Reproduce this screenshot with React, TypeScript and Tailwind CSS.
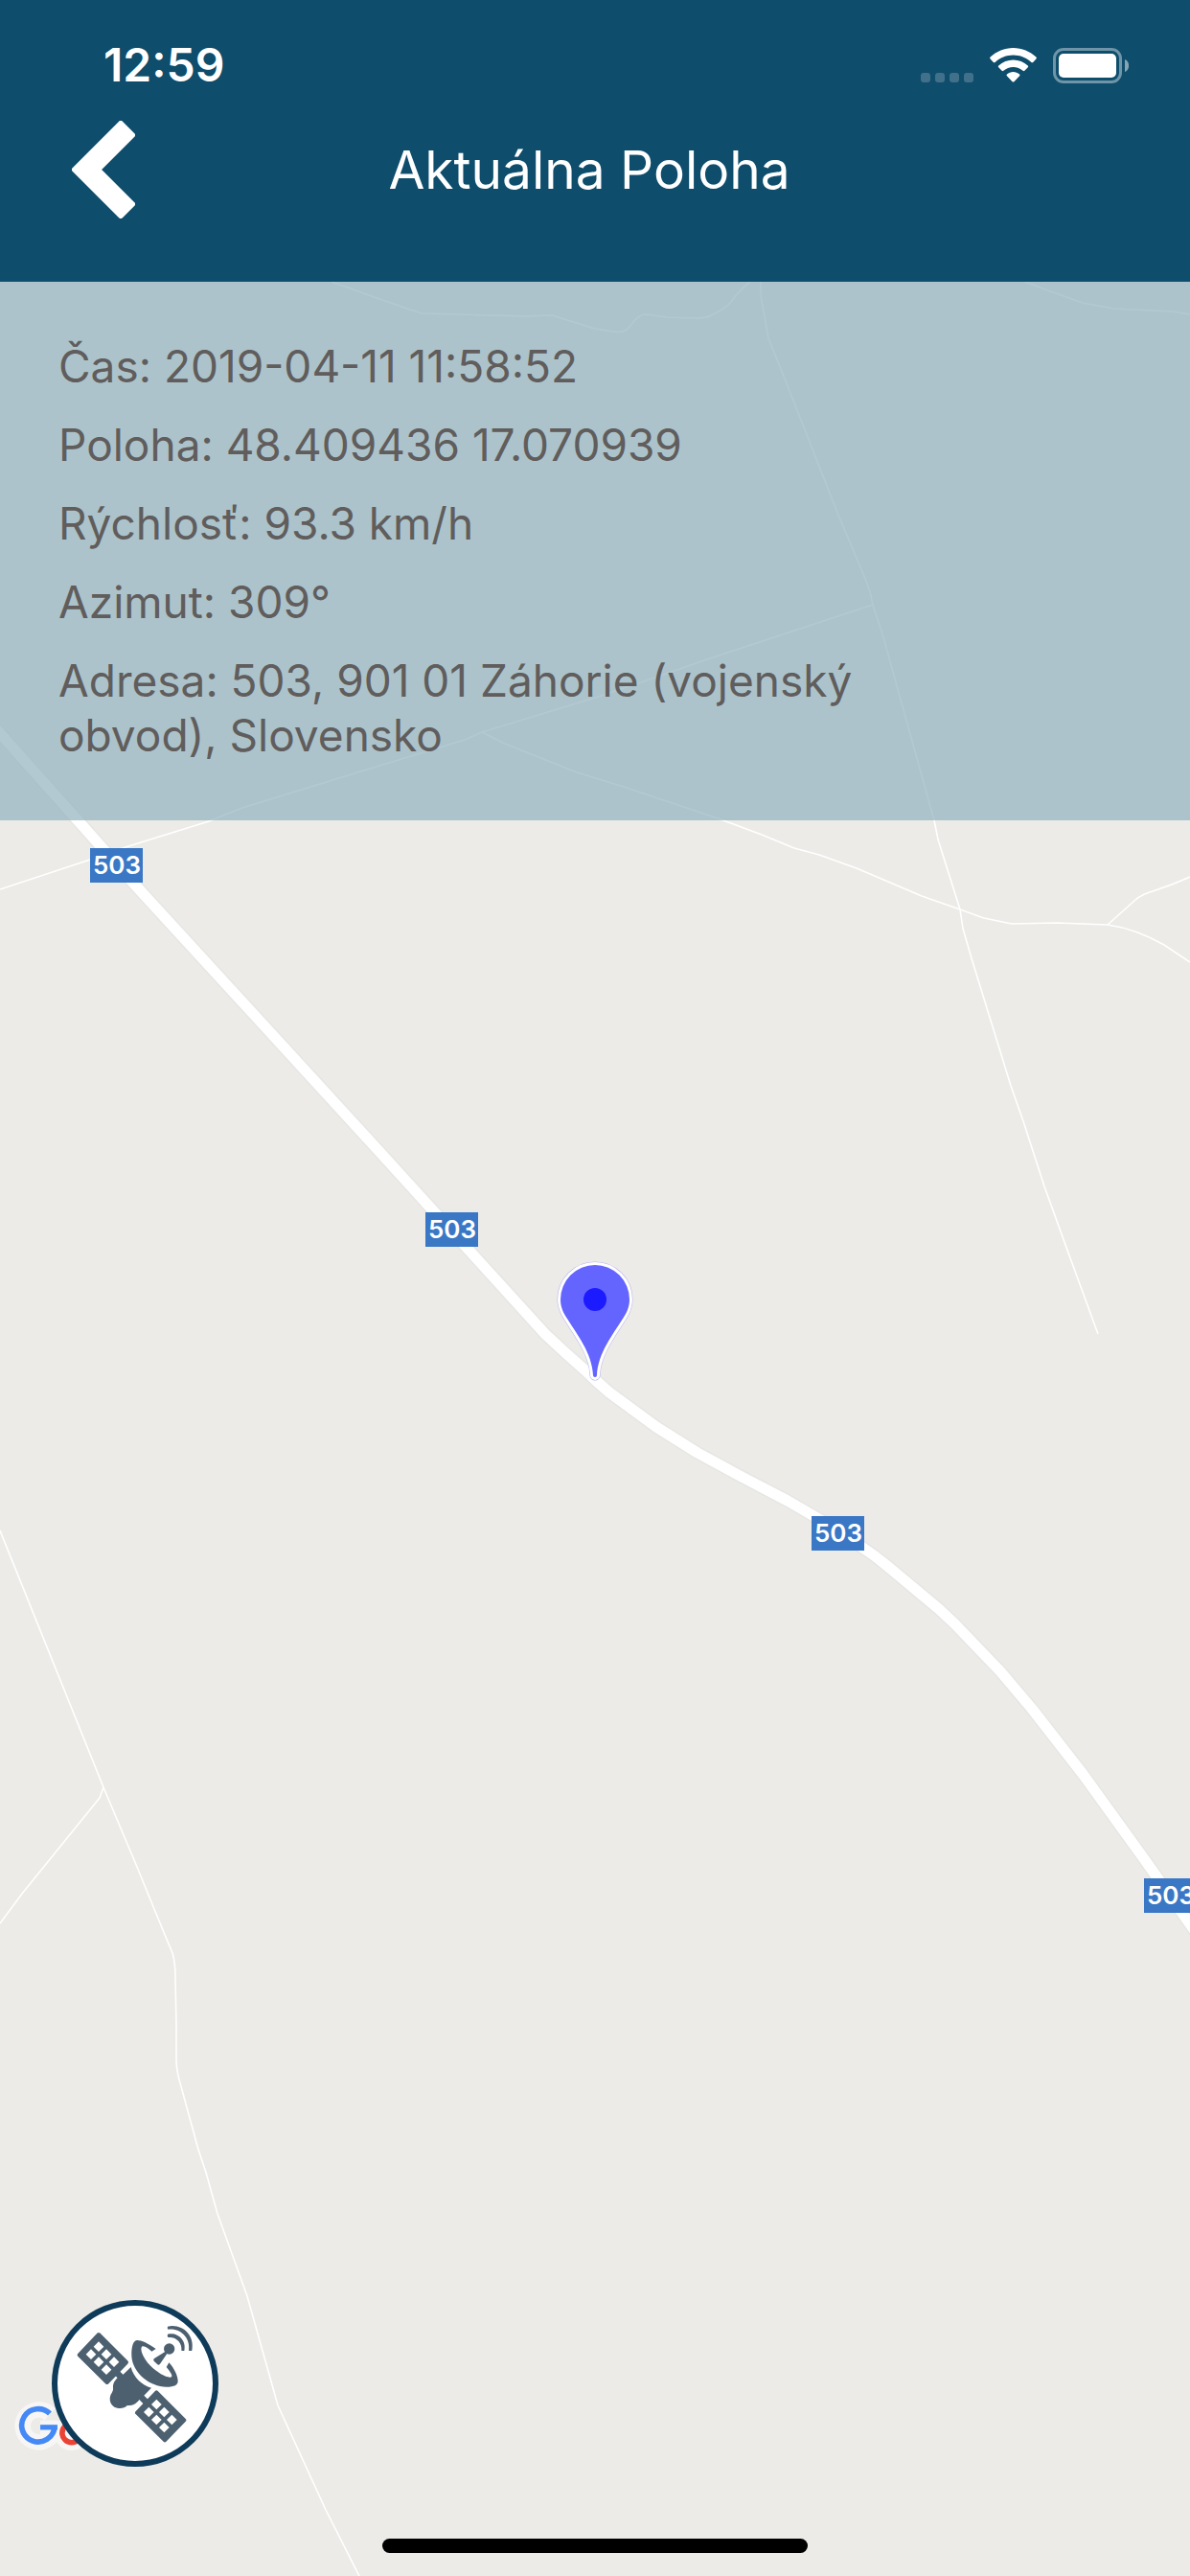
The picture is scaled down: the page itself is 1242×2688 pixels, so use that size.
import React from 'react';

type Shield = { x: number, y: number }

const POSITION = {
    time: "2019-04-11 11:58:52",
    coords: "48.409436 17.070939",
    speed: "93.3 km/h",
    azimuth: "309°",
    address: "503, 901 01 Záhorie (vojenský obvod), Slovensko",
}

const MAIN_ROAD = "M-10 754L82 857L147 930L400 1206L569 1392Q590 1412 612 1431Q622 1441 636 1453L685 1489L728 1516L776 1542L822 1566L858 1587L899 1614Q913 1623 926 1634L980 1679L996 1694L1044 1744L1077 1783L1130 1851L1195 1941L1250 2019"

const MINOR_ROADS = [
    "M346 294L396 312L440 327L547 330L576 329L621 343L640 346Q652 348 657 341Q666 328 674 328L696 331L726 332Q738 332 742 329Q756 323 763 315Q770 304 783 294",
    "M794 294Q793 310 797 325L802 353L819 395L874 535L904 606Q909 618 911 631L922 665L948 759L975 856L979 876L1002 949L1005 969L1014 1000L1055 1133L1068 1170L1090 1238L1116 1310L1146 1392",
    "M1070 294L1088 301L1130 316L1162 322L1223 325L1242 328",
    "M0 928L94 897L131 884L218 857L253 843L396 799L485 772L503 764L621 728L669 712L744 686L911 631",
    "M503 764L527 776L602 806L651 821L752 855L795 871L829 885L855 892L894 906L962 935L1002 949L1027 958L1056 964L1104 963L1156 965Q1185 969 1215 986L1242 1004",
    "M1156 965L1185 939Q1192 933 1203 930Q1222 924 1242 915",
    "M0 1597L108 1865L143 1948L163 1997L180 2038Q183 2048 183 2063L184 2114L184 2150Q184 2158 187 2170L207 2243L215 2267L227 2310L258 2396L290 2510L340 2619L378 2694",
    "M108 1865L104 1876L23 1976L0 2007",
]

const SHIELDS: Shield[] = [
    {x: 94, y: 885},
    {x: 444, y: 1265},
    {x: 847, y: 1582},
    {x: 1194, y: 1960},
]

const PIN = "M585 1356a36 36 0 0 1 72 0C657 1364 654 1370 650 1376C640 1392 624 1412 623 1435a2 2 0 0 1-4 0C618 1412 602 1392 592 1376C588 1370 585 1364 585 1356z"

const MapCanvas = () => (
    <svg viewBox="0 294 1242 2394" preserveAspectRatio="xMidYMid slice" className="absolute inset-0 h-full w-full" role="img" aria-label="Mapa">
        <g fill="none" stroke="#ffffff" strokeWidth="1.6" strokeLinejoin="round">
            {MINOR_ROADS.map((road) => <path key={road} d={road}/>)}
        </g>
        <g fill="none" strokeLinejoin="round">
            <path d={MAIN_ROAD} stroke="#e6e6e4" strokeWidth="14"/>
            <path d={MAIN_ROAD} stroke="#ffffff" strokeWidth="11"/>
        </g>
        {SHIELDS.map(({x, y}) => (
            <g key={x}>
                <rect x={x} y={y} width="55" height="36" fill="#3a78c6"/>
                <text x={x + 28} y={y + 27} textAnchor="middle" fill="#ffffff" className="text-[26px] font-semibold">503</text>
            </g>
        ))}
        <path d={PIN} fill="none" stroke="#b4b1ee" strokeWidth="7"/>
        <path d={PIN} fill="none" stroke="#ffffff" strokeWidth="6"/>
        <path d={PIN} fill="#6464ff"/>
        <circle cx="621" cy="1356" r="12" fill="#1c1aff"/>
    </svg>
)

const StatusIcons = () => (
    <div className="flex items-center gap-[17px]">
        <svg viewBox="0 0 55 36" className="h-9 w-[55px]" fill="#41708a">
            <rect x="0" y="26" width="10" height="10" rx="3"/>
            <rect x="15" y="26" width="10" height="10" rx="3"/>
            <rect x="30" y="26" width="10" height="10" rx="3"/>
            <rect x="45" y="26" width="10" height="10" rx="3"/>
        </svg>
        <svg viewBox="0 0 49 36" className="h-9 w-[49px]" fill="#ffffff">
            <path d="M24.500 0C15.500 0 7 3.500.600 9.600Q-.300 10.500.600 11.400L3.800 14.900Q4.700 15.700 5.600 14.900C10.700 10.200 17.400 7.500 24.500 7.500S38.300 10.200 43.400 14.900Q44.300 15.700 45.200 14.900L48.400 11.400Q49.300 10.500 48.400 9.600C42 3.500 33.500 0 24.500 0z"/>
            <path d="M24.500 12.500C18.800 12.500 13.400 14.600 9.200 18.500Q8.300 19.400 9.200 20.300L12.600 23.800Q13.500 24.600 14.400 23.800C17.200 21.300 20.700 20 24.500 20S31.800 21.300 34.600 23.800Q35.500 24.600 36.400 23.800L39.800 20.300Q40.700 19.400 39.800 18.500C35.600 14.600 30.200 12.500 24.500 12.500z"/>
            <path d="M24.500 25C22.100 25 19.800 25.900 17.900 27.400Q17 28.300 17.900 29.200L23.600 35.200Q24.500 36 25.400 35.200L31.100 29.200Q32 28.300 31.100 27.400C29.200 25.900 26.900 25 24.500 25z"/>
        </svg>
        <svg viewBox="0 0 79 37" className="h-[37px] w-[79px]">
            <rect x="1.500" y="1.500" width="69" height="34" rx="9.500" fill="none" stroke="#6f95a8" strokeWidth="3"/>
            <rect x="6" y="6" width="60" height="25" rx="5" fill="#ffffff"/>
            <path d="M75 12C80.500 14 80.500 23 75 25z" fill="#86a5b4"/>
        </svg>
    </div>
)

const Header = () => (
    <header className="bg-[#0e4d6b] pb-[66px] text-white">
        <div className="flex h-[126px] items-center justify-between pt-[10px] pr-16 pl-[108px]">
            <span className="text-5xl font-semibold">12:59</span>
            <StatusIcons/>
        </div>
        <div className="flex items-center pr-[153px] pl-[75px]">
            <button type="button" aria-label="Späť">
                <svg viewBox="0 0 66 102" className="h-[102px] w-[66px]">
                    <path d="M51 3L63 15L27 51L63 87L51 99L3 51z" fill="#ffffff" stroke="#ffffff" strokeWidth="6" strokeLinejoin="round"/>
                </svg>
            </button>
            <h1 className="flex-1 text-center text-[55px] leading-none">Aktuálna Poloha</h1>
        </div>
    </header>
)

const PositionInfo = () => (
    <section className="relative bg-[#91b2bf]/70 px-[61px] py-[60px] text-[#605d5c]">
        <div className="flex w-5/6 flex-col gap-[25px] text-[46px] leading-[57px]">
            <p>{`Čas: ${POSITION.time}`}</p>
            <p>{`Poloha: ${POSITION.coords}`}</p>
            <p>{`Rýchlosť: ${POSITION.speed}`}</p>
            <p>{`Azimut: ${POSITION.azimuth}`}</p>
            <p>{`Adresa: ${POSITION.address}`}</p>
        </div>
    </section>
)

const PANEL_CELLS = [[0, 0], [24, 24], [48, 48], [-24, 24], [0, 48], [24, 72]]

const SolarPanel = ({x, y}: { x: number, y: number }) => (
    <g>
        <path d={`M${x} ${y + 6}l87 87l-61 63l-87-86z`} fill="#4d6070" stroke="#4d6070" strokeWidth="12" strokeLinejoin="round"/>
        {PANEL_CELLS.map(([dx, dy]) => (
            <path key={`${dx} ${dy}`} d={`M${x + dx} ${y + dy + 28}l16 16l-16 16l-16-16z`} fill="#ffffff"/>
        ))}
    </g>
)

const SatelliteIcon = () => (
    <svg viewBox="180 78 486 486" className="h-full w-full" fill="#4d6070">
        <SolarPanel x={309} y={162}/>
        <SolarPanel x={490} y={343}/>
        <path d="M356 292L370 278L392 300L378 314zM434 370L448 356L470 378L456 392z"/>
        <path d="M410 270C418 302 445 328 474 335L450 360L437 371Q424 389 408 390Q401 389 397 391C390 400 372 402 358 395C343 386 340 365 350 351Q356 344 354 334C353 318 362 310 369 302L384 295z"/>
        <path d="M488 213C465 196 442 186 430 186C417 186 411 206 412 235C415 290 470 332 521 332C547 332 557 325 557 314C557 299 546 274 529 256L521 270C535 287 541 297 537 301C525 306 495 290 470 265C446 239 438 213 444 206C452 202 465 212 475 221z"/>
        <circle cx="530" cy="213" r="17"/>
        <path d="M518 221L483 243Q478 247 482 251L493 262Q499 265 502 259L523 228z"/>
        <path d="M525 167C555 159 585 185 577 219Q573 220 568 218C571 194 552 174 526 177Q523 172 525 167z"/>
        <path d="M525 143C570 133 611 170 601 218Q597 220 591 218C597 180 567 147 526 152Q523 148 525 143z"/>
    </svg>
)

const GoogleLogo = () => (
    <svg viewBox="45 373 216 160" className="absolute bottom-[130px] left-[15px] h-[53px] w-[72px]" fill="none" role="img" aria-label="Google">
        <g stroke="#f7f6f5" strokeWidth="50" strokeLinejoin="round">
            <path d="M157 416A51 51 0 1 0 172 460H126"/>
            <circle cx="225" cy="475" r="30"/>
        </g>
        <path d="M156 414A52 52 0 1 0 171 457" stroke="#4489f5" strokeWidth="17"/>
        <path d="M126 457H180" stroke="#4489f5" strokeWidth="16"/>
        <circle cx="225" cy="475" r="30" stroke="#ea4335" strokeWidth="17"/>
    </svg>
)

const App = () => {
    return (
        <div className="flex min-h-screen flex-col bg-[#ecebe7] font-['Inter',sans-serif]">
            <Header/>
            <main className="relative flex flex-1 flex-col overflow-hidden">
                <MapCanvas/>
                <PositionInfo/>
                <GoogleLogo/>
                <div className="relative mt-auto flex flex-col gap-[75px] px-[54px] pt-12 pb-6">
                    <button type="button" aria-label="Satelitná mapa" className="size-[174px] rounded-full border-6 border-[#0f3b5a] bg-white">
                        <SatelliteIcon/>
                    </button>
                    <div className="h-[15px] w-[444px] self-center rounded-full bg-black"/>
                </div>
            </main>
        </div>
    );
};

export default App;
